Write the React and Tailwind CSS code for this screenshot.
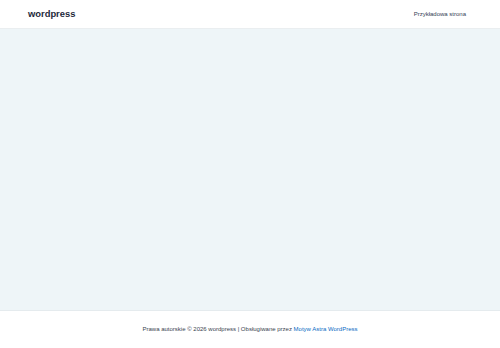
export default function App() {
  return (
    <div className="flex h-[348px] w-[500px] flex-col bg-white" style={{ fontFamily: '"Liberation Sans", Arial, sans-serif' }}>
      {/* Header */}
      <header className="flex h-[29px] items-center justify-between border-b border-[#eaeef0] bg-white pl-[28px] pr-[34px]">
        <span className="text-[9.4px] font-bold text-[#1e293b]">wordpress</span>
        <span className="text-[6px] text-[#334155]">Przykładowa strona</span>
      </header>

      {/* Content */}
      <main className="flex-1 bg-[#eef5f8]" />

      {/* Footer */}
      <footer className="flex h-[38px] items-center justify-center border-t border-[#e5ebee] bg-white pb-[1px]">
        <p className="text-[6px] text-[#3a4350]">
          Prawa autorskie © 2026 wordpress | Obsługiwane przez{' '}
          <a className="text-[#0a6bc4]">Motyw Astra WordPress</a>
        </p>
      </footer>
    </div>
  );
}
